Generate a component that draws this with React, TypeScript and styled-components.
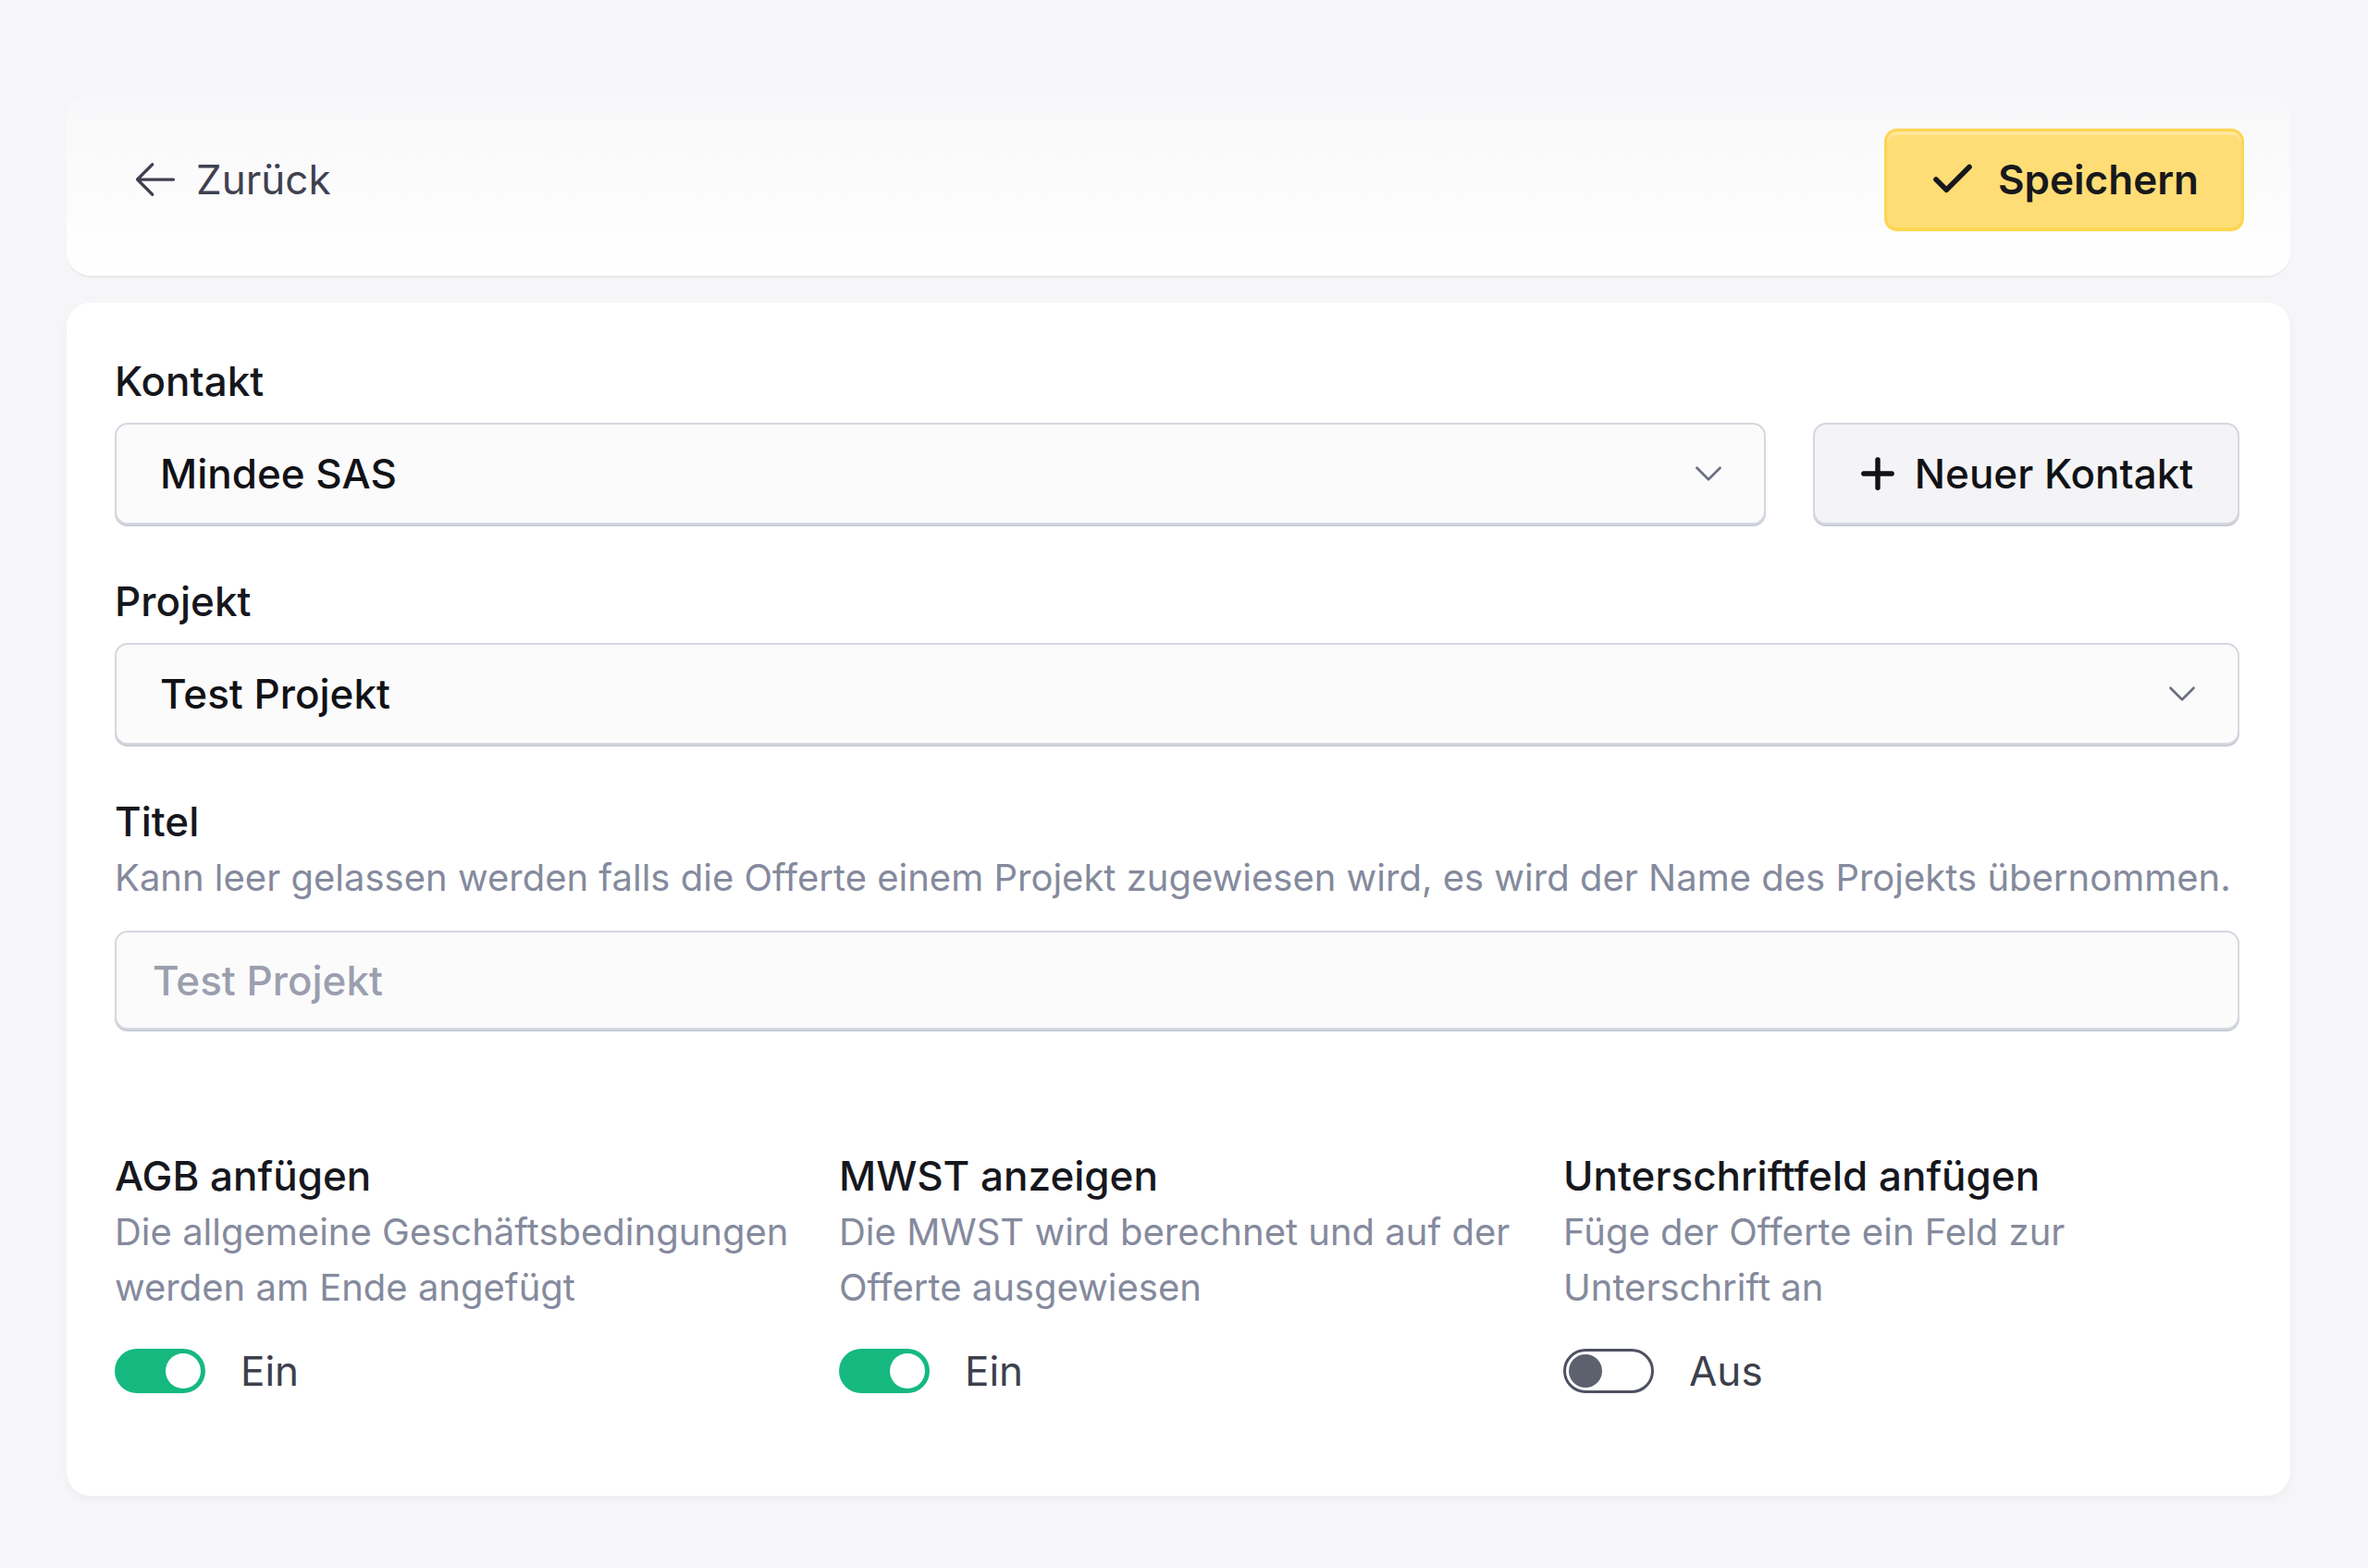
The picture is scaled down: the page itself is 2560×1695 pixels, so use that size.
import React from 'react';
import styled, { createGlobalStyle } from 'styled-components';

const GlobalStyle = createGlobalStyle`
  html, body {
    margin: 0;
    padding: 0;
    background: #f6f6f8;
    font-family: Inter, "Noto Sans", "Liberation Sans", sans-serif;
    color: #16171d;
  }
  * { box-sizing: border-box; }
`;

const Page = styled.div`
  min-height: 1695px;
  padding: 103px 84px 0 72px;
`;

const Header = styled.header`
  height: 195px;
  display: flex;
  align-items: center;
  justify-content: space-between;
  padding: 0 50px 13px 52px;
  border-radius: 26px;
  background: linear-gradient(180deg, #f8f8fa 0%, #ffffff 100%);
  box-shadow: 0 3px 2px -1px rgba(30, 30, 60, 0.07);
`;

const BackLink = styled.a`
  display: flex;
  align-items: center;
  gap: 18px;
  padding-left: 18px;
  font-size: 44px;
  line-height: 1;
  color: #3f4150;
  text-decoration: none;
  cursor: pointer;
`;

const SaveButton = styled.button`
  display: flex;
  align-items: center;
  gap: 22px;
  width: 389px;
  height: 111px;
  padding: 0 0 0 44px;
  border: 3px solid #fcd652;
  border-bottom-width: 4px;
  border-radius: 14px;
  background: #ffdd76;
  box-shadow: inset 0 4px 0 #ffe69a;
  font-family: inherit;
  font-size: 44px;
  font-weight: 600;
  color: #17181c;
  cursor: pointer;
`;

const Card = styled.main`
  margin-top: 29px;
  padding: 54px 55px 108px 52px;
  border-radius: 26px;
  background: #ffffff;
  box-shadow: 0 4px 10px rgba(30, 30, 60, 0.04);
`;

const Field = styled.section<{ $spaced?: boolean }>`
  display: flex;
  flex-direction: column;
  margin-top: ${(p) => (p.$spaced ? '52px' : '0')};
`;

const Label = styled.div`
  font-size: 44px;
  font-weight: 500;
  line-height: 62px;
  color: #16171d;
`;

const Hint = styled.div`
  font-size: 40px;
  line-height: 60px;
  color: #858a9d;
`;

const Row = styled.div`
  display: flex;
  gap: 51px;
  margin-top: 14px;
`;

const Select = styled.div<{ $top?: number }>`
  flex: 1 1 auto;
  display: flex;
  align-items: center;
  justify-content: space-between;
  height: 110px;
  margin-top: ${(p) => p.$top ?? 0}px;
  padding: 0 40px 0 47px;
  border: 2px solid #d6d8e0;
  border-radius: 14px;
  background: #fbfbfc;
  box-shadow: 0 2px 0 #c9ccd7;
  font-size: 44px;
  font-weight: 500;
  color: #111216;
`;

const GhostButton = styled.button`
  flex: 0 0 461px;
  display: flex;
  align-items: center;
  justify-content: center;
  gap: 14px;
  height: 110px;
  padding: 0 6px 0 0;
  border: 2px solid #d6d8e0;
  border-radius: 14px;
  background: #f4f4f6;
  box-shadow: 0 2px 0 #c9ccd7;
  font-family: inherit;
  font-size: 44px;
  font-weight: 500;
  color: #111216;
  cursor: pointer;
`;

const TextInput = styled.input`
  height: 107px;
  margin-top: 27px;
  padding: 0 39px;
  border: 2px solid #d6d8e0;
  border-radius: 14px;
  background: #fbfbfc;
  box-shadow: 0 2px 0 #c9ccd7;
  font-family: inherit;
  font-size: 44px;
  font-weight: 500;
  color: #111216;
  outline: none;
  &::placeholder {
    color: #9b9fae;
  }
`;

const OptionGrid = styled.div`
  display: grid;
  grid-template-columns: repeat(3, 1fr);
  column-gap: 52px;
  margin-top: 127px;
`;

const Option = styled.div`
  display: flex;
  flex-direction: column;
`;

const ToggleRow = styled.label`
  display: flex;
  align-items: center;
  gap: 38px;
  margin-top: 33px;
  font-size: 44px;
  color: #3d3f4c;
`;

const Track = styled.span<{ $on: boolean }>`
  position: relative;
  display: inline-block;
  width: 98px;
  height: 48px;
  border-radius: 24px;
  background: ${(p) => (p.$on ? '#15b97f' : '#ffffff')};
  border: ${(p) => (p.$on ? 'none' : '3px solid #4e5161')};
`;

const Knob = styled.span<{ $on: boolean }>`
  position: absolute;
  top: ${(p) => (p.$on ? '5px' : '3px')};
  left: ${(p) => (p.$on ? '55px' : '3px')};
  width: ${(p) => (p.$on ? '38px' : '36px')};
  height: ${(p) => (p.$on ? '38px' : '36px')};
  border-radius: 50%;
  background: ${(p) => (p.$on ? '#ffffff' : '#5d606d')};
`;

const ArrowLeft = () => (
  <svg width="52" height="52" viewBox="0 0 24 24" fill="none" stroke="currentColor" strokeWidth="1.5" strokeLinecap="round" strokeLinejoin="round">
    <path d="M10.5 19.5 3 12m0 0 7.5-7.5M3 12h18" />
  </svg>
);

const CheckIcon = () => (
  <svg width="54" height="54" viewBox="0 0 24 24" fill="none" stroke="currentColor" strokeWidth="2.5" strokeLinecap="round" strokeLinejoin="round">
    <path d="M20 6 9 17l-5-5" />
  </svg>
);

const PlusIcon = () => (
  <svg width="52" height="52" viewBox="0 0 24 24" fill="none" stroke="currentColor" strokeWidth="2.5" strokeLinecap="round" strokeLinejoin="round">
    <path d="M5 12h14" />
    <path d="M12 5v14" />
  </svg>
);

const ChevronDown = () => (
  <svg width="40" height="40" viewBox="0 0 24 24" fill="none" stroke="#6b6f80" strokeWidth="1.6" strokeLinecap="round" strokeLinejoin="round">
    <path d="m19.5 8.25-7.5 7.5-7.5-7.5" />
  </svg>
);

const Toggle = ({ on }: { on: boolean }) => (
  <ToggleRow>
    <Track $on={on}>
      <Knob $on={on} />
    </Track>
    {on ? 'Ein' : 'Aus'}
  </ToggleRow>
);

const options = [
  {
    title: 'AGB anfügen',
    hint: 'Die allgemeine Geschäftsbedingungen werden am Ende angefügt',
    on: true,
  },
  {
    title: 'MWST anzeigen',
    hint: 'Die MWST wird berechnet und auf der Offerte ausgewiesen',
    on: true,
  },
  {
    title: 'Unterschriftfeld anfügen',
    hint: 'Füge der Offerte ein Feld zur Unterschrift an',
    on: false,
  },
];

const App = () => (
  <>
    <GlobalStyle />
    <Page>
      <Header>
        <BackLink>
          <ArrowLeft />
          Zurück
        </BackLink>
        <SaveButton>
          <CheckIcon />
          Speichern
        </SaveButton>
      </Header>

      <Card>
        <Field>
          <Label>Kontakt</Label>
          <Row>
            <Select>
              Mindee SAS
              <ChevronDown />
            </Select>
            <GhostButton>
              <PlusIcon />
              Neuer Kontakt
            </GhostButton>
          </Row>
        </Field>

        <Field $spaced>
          <Label>Projekt</Label>
          <Select $top={14}>
            Test Projekt
            <ChevronDown />
          </Select>
        </Field>

        <Field $spaced>
          <Label>Titel</Label>
          <Hint>
            Kann leer gelassen werden falls die Offerte einem Projekt zugewiesen wird, es wird der Name des Projekts übernommen.
          </Hint>
          <TextInput placeholder="Test Projekt" />
        </Field>

        <OptionGrid>
          {options.map((o) => (
            <Option key={o.title}>
              <Label>{o.title}</Label>
              <Hint>{o.hint}</Hint>
              <Toggle on={o.on} />
            </Option>
          ))}
        </OptionGrid>
      </Card>
    </Page>
  </>
);

export default App;
